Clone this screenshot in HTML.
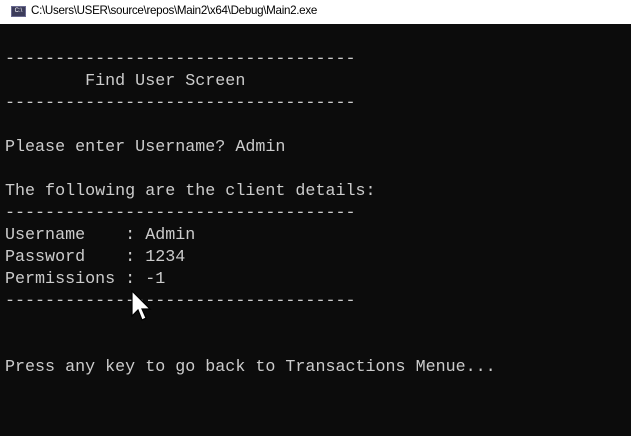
<!DOCTYPE html>
<html><head><meta charset="utf-8"><style>
body{margin:0;width:631px;height:436px;background:#0c0c0c;overflow:hidden;position:relative;font-family:"Liberation Sans",sans-serif}
.tb{position:absolute;left:0;top:0;width:631px;height:24px;background:#fff;}
.tb span{position:absolute;left:31px;top:4px;font-size:11.6px;color:#000;letter-spacing:-0.3px}
.ic{position:absolute;left:11px;top:6px;width:15px;height:11px;background:#3c3c5a;border:1px solid #6a6a90;box-sizing:border-box;font-size:6px;color:#fff;line-height:9px;text-align:center}
pre{position:absolute;left:5px;top:49px;margin:0;font-family:"Liberation Mono",monospace;font-size:16.7px;line-height:22px;color:#cccccc}
</style></head><body>
<div class="tb"><div class="ic">C:\</div><span>C:\Users\USER\source\repos\Main2\x64\Debug\Main2.exe</span></div>
<pre>-----------------------------------
        Find User Screen
-----------------------------------

Please enter Username? Admin

The following are the client details:
-----------------------------------
Username    : Admin
Password    : 1234
Permissions : -1
-----------------------------------


Press any key to go back to Transactions Menue...</pre>
<svg style="position:absolute;left:131px;top:290px" width="22" height="34" viewBox="0 0 22 34"><path d="M1 1 L1 26 L7 20 L11 30 L15 28 L11 19 L19 19 Z" fill="#fff" stroke="#000" stroke-width="1.2"/></svg>
</body></html>
